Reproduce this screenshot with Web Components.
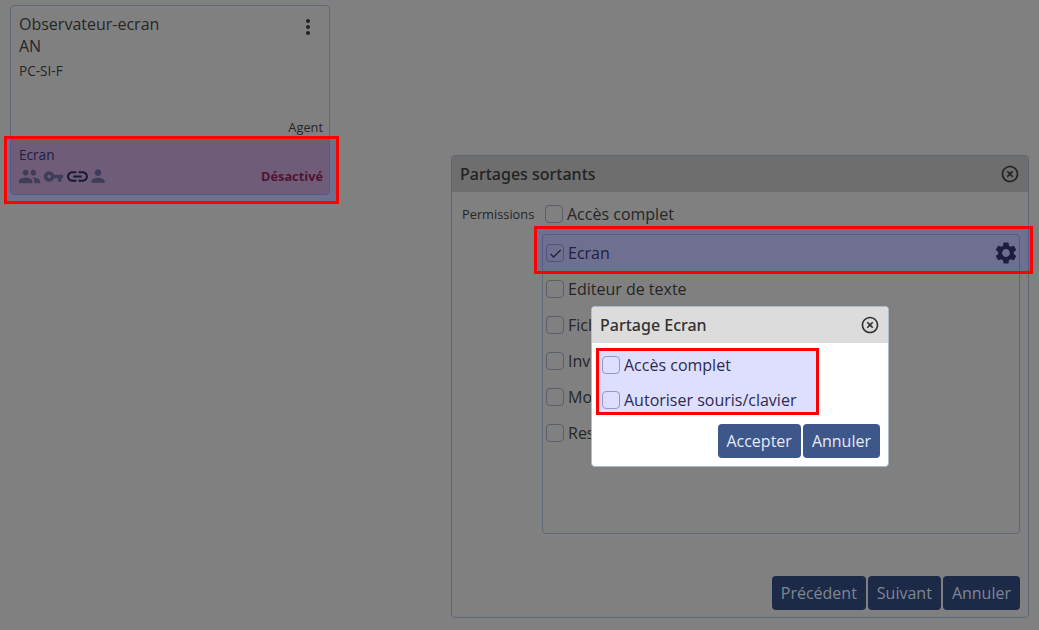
<!DOCTYPE html>
<html lang="fr"><head><meta charset="utf-8"><title>Partages</title>
<style>
html,body{margin:0;height:630px;overflow:hidden}
body{background:#808080;color:#262626;font:16px/22px "Open Sans",sans-serif;position:relative;display:flex;align-items:flex-start}
</style></head><body>
<x-agent-card style="margin:5px 0 0 10px"></x-agent-card>
<x-panel style="margin:155px 0 0 121px"></x-panel>
<x-share-dialog></x-share-dialog>
<script>
const P={
people:'M16 11c1.66 0 2.99-1.34 2.99-3S17.66 5 16 5c-1.66 0-3 1.34-3 3s1.34 3 3 3zm-8 0c1.66 0 2.99-1.34 2.99-3S9.66 5 8 5C6.34 5 5 6.34 5 8s1.34 3 3 3zm0 2c-2.33 0-7 1.17-7 3.5V19h14v-2.5c0-2.33-4.67-3.5-7-3.5zm8 0c-.29 0-.62.02-.97.05 1.16.84 1.97 1.97 1.97 3.45V19h6v-2.5c0-2.33-4.67-3.5-7-3.5z',
key:'M12.65 10C11.83 7.67 9.61 6 7 6c-3.31 0-6 2.69-6 6s2.69 6 6 6c2.61 0 4.83-1.67 5.65-4H17v4h4v-4h2v-4H12.65zM7 14c-1.1 0-2-.9-2-2s.9-2 2-2 2 .9 2 2-.9 2-2 2z',
link:'M3.9 12c0-1.71 1.39-3.1 3.1-3.1h4V7H7c-2.76 0-5 2.24-5 5s2.24 5 5 5h4v-1.9H7c-1.71 0-3.1-1.39-3.1-3.1zM8 13h8v-2H8v2zm9-6h-4v1.9h4c1.71 0 3.1 1.39 3.1 3.1s-1.39 3.1-3.1 3.1h-4V17h4c2.76 0 5-2.24 5-5s-2.24-5-5-5z',
person:'M12 12c2.21 0 4-1.79 4-4s-1.79-4-4-4-4 1.79-4 4 1.79 4 4 4zm0 2c-2.67 0-8 1.34-8 4v2h16v-2c0-2.66-5.33-4-8-4z',
settings:'M19.14 12.94c.04-.3.06-.61.06-.94 0-.32-.02-.64-.07-.94l2.03-1.58c.18-.14.23-.41.12-.61l-1.92-3.32c-.12-.22-.37-.29-.59-.22l-2.39.96c-.5-.38-1.03-.7-1.62-.94l-.36-2.54c-.04-.24-.24-.41-.48-.41h-3.84c-.24 0-.43.17-.47.41l-.36 2.54c-.59.24-1.13.57-1.62.94l-2.39-.96c-.22-.08-.47 0-.59.22L2.74 8.87c-.12.21-.08.47.12.61l2.03 1.58c-.05.3-.09.63-.09.94s.02.64.07.94l-2.03 1.58c-.18.14-.23.41-.12.61l1.92 3.32c.12.22.37.29.59.22l2.39-.96c.5.38 1.03.7 1.62.94l.36 2.54c.05.24.24.41.48.41h3.84c.24 0 .44-.17.47-.41l.36-2.54c.59-.24 1.13-.56 1.62-.94l2.39.96c.22.08.47 0 .59-.22l1.92-3.32c.12-.22.07-.47-.12-.61l-2.01-1.58zM12 15.6c-1.98 0-3.6-1.62-3.6-3.6s1.62-3.6 3.6-3.6 3.6 1.62 3.6 3.6-1.62 3.6-3.6 3.6z',
close:'M14.59 8L12 10.59 9.41 8 8 9.41 10.59 12 8 14.59 9.41 16 12 13.41 14.59 16 16 14.59 13.41 12 16 9.41 14.59 8zM12 2C6.47 2 2 6.47 2 12s4.47 10 10 10 10-4.47 10-10S17.53 2 12 2zm0 18c-4.41 0-8-3.59-8-8s3.59-8 8-8 8 3.59 8 8-3.59 8-8 8z',
more:'M12 8c1.1 0 2-.9 2-2s-.9-2-2-2-2 .9-2 2 .9 2 2 2zm0 2c-1.1 0-2 .9-2 2s.9 2 2 2 2-.9 2-2-.9-2-2-2zm0 6c-1.1 0-2 .9-2 2s.9 2 2 2 2-.9 2-2-.9-2-2-2z',
check:'M9 16.17L4.83 12l-1.41 1.41L9 19 21 7l-1.41-1.41z'};
function def(name,css,html){
  customElements.define(name,class extends HTMLElement{
    connectedCallback(){
      if(this.shadowRoot)return;
      const r=this.attachShadow({mode:'open'});
      r.innerHTML='<style>'+css+'</style>'+(typeof html==='function'?html(this):html);
    }
  });
}
def('x-icon',':host{display:inline-flex;flex:none;line-height:0}svg{display:block;fill:currentColor}',
  e=>{const s=e.getAttribute('size')||24;return `<svg width="${s}" height="${s}" viewBox="0 0 24 24"><path d="${P[e.getAttribute('name')]}"/></svg>`});
def('x-check',':host{display:inline-flex;flex:none;width:18px;height:18px;box-sizing:border-box;border:1px solid var(--cb,#59606b);border-radius:4px;align-items:center;justify-content:center;color:#222}',
  e=>e.hasAttribute('checked')?`<x-icon name="check" size="15"></x-icon>`:'');
def('x-option',':host{display:flex;align-items:center;gap:4px;height:36px;padding-left:3px;box-sizing:border-box;white-space:nowrap}::slotted(*){margin-left:auto}span.clip{max-width:23px;overflow:hidden}',
  e=>`<x-check ${e.hasAttribute('checked')?'checked':''}></x-check><span class="${e.hasAttribute('clip')?'clip':''}">${e.getAttribute('label')}</span><slot></slot>`);
def('x-spot',':host{display:block;position:relative}.o{position:absolute;z-index:3;top:var(--t,0);right:var(--r,0);bottom:var(--b,0);left:var(--l,0);border:3px solid #f00;background:rgba(0,0,255,.13);pointer-events:none}',
  '<slot></slot><div class="o"></div>');
def('x-btn',':host{display:inline-flex;align-items:center;height:34px;padding:0 9px;border-radius:4px;background:var(--bg,#3d578b);color:var(--fg,#e6eaf2);font-size:16px;white-space:nowrap}','<slot></slot>');
def('x-agent-card',`:host{display:flex;flex-direction:column;box-sizing:border-box;width:320px;height:190px;border:1px solid #5f6877;border-radius:4px}
.top{display:flex;justify-content:space-between;padding:7px 9px 0 8px}
.t{font-size:16px;line-height:22px}.s{font-size:13.6px;line-height:18px;margin-top:5px}
.kebab{margin-top:2px;color:#222}
.role{margin-top:auto;text-align:right;font-size:12.8px;line-height:18px;padding:0 6px 3px 0}
.row{height:55px;box-sizing:border-box;background:#806a64;border-radius:0 0 3px 3px;padding:6px 6px 0 8px;font-size:13.6px;line-height:20px}
.l{display:flex;align-items:center;margin-left:-1.5px;color:#4a4742;height:24px;margin-top:-1px}
.st{margin-left:auto;font-weight:700;font-size:12.8px;color:#5e1812}
.k{margin-left:2px;margin-top:1px}.lk{color:#1c1c1c;margin-left:1.1px}.p{margin-left:-1.9px}
x-spot{--t:-3px;--r:-10px;--b:-10px;--l:-7px}`,
`<div class="top"><div><div class="t">Observateur-ecran<br>AN</div><div class="s">PC-SI-F</div></div><x-icon class="kebab" name="more"></x-icon></div>
<div class="role">Agent</div>
<x-spot><div class="row">Ecran<div class="l"><x-icon name="people" size="23"></x-icon><x-icon class="k" name="key" size="21"></x-icon><x-icon class="lk" name="link" size="25"></x-icon><x-icon class="p" name="person" size="20"></x-icon><span class="st">Désactivé</span></div></div></x-spot>`);
def('x-panel',`:host{display:flex;flex-direction:column;box-sizing:border-box;width:578px;height:463px;border:1px solid #5f6877;border-radius:4px}
header{display:flex;align-items:center;justify-content:space-between;height:36px;padding:0 8px;background:#6e6e6e;font-family:"Noto Sans",sans-serif;font-weight:500;flex:none;border-radius:3px 3px 0 0;color:#222}
.b{display:grid;grid-template-columns:80px 478px;padding:13px 0 0 10px}
.lab{font-size:12.8px;line-height:18px}
.all{height:18px;margin-bottom:11px;padding-left:3px;display:flex;gap:4px;align-items:center;white-space:nowrap}
.list{grid-column:2;height:300px;box-sizing:border-box;border:1px solid #5f6877;border-radius:4px}
x-spot{--t:-9px;--r:-14px;--b:-3px;--l:-9px}
footer{margin-top:auto;display:flex;justify-content:flex-end;gap:2px;padding:0 8px 7px 0;--bg:#1d2a47;--fg:#7f8692}`,
`<header><span>Partages sortants</span><x-icon name="close" size="20"></x-icon></header>
<div class="b"><div class="lab">Permissions</div><div class="all"><x-check></x-check><span>Accès complet</span></div>
<div class="list"><x-spot><x-option label="Ecran" checked><x-icon name="settings" size="26" style="color:#222"></x-icon></x-option></x-spot>
<x-option label="Editeur de texte"></x-option><x-option clip label="Fich"></x-option><x-option clip label="Inv"></x-option><x-option clip label="Mo"></x-option><x-option clip label="Res"></x-option></div></div>
<footer><x-btn>Précédent</x-btn><x-btn>Suivant</x-btn><x-btn>Annuler</x-btn></footer>`);
def('x-share-dialog',`:host{position:absolute;left:591px;top:306px;z-index:5;box-sizing:border-box;width:298px;height:161px;background:#fff;border:1px solid #a9bcd0;border-radius:4px;display:flex;flex-direction:column;color:#333}
header{display:flex;align-items:center;justify-content:space-between;height:36px;flex:none;padding:0 8px 0 8px;background:#dcdcdc;font-family:"Noto Sans",sans-serif;font-weight:500;border-radius:3px 3px 0 0}
.b{padding:5px 0 0 4px}
x-spot{width:223px;--b:2px;--cb:#a8b0c8}
x-option{height:35px;padding-left:6px}
x-option:first-child{height:34px}
footer{display:flex;justify-content:flex-end;gap:2px;margin-top:7px;padding-right:8px}
.a{padding-left:8px}`,
`<header><span>Partage Ecran</span><x-icon name="close" size="20"></x-icon></header>
<div class="b"><x-spot><x-option label="Accès complet"></x-option><x-option label="Autoriser souris/clavier"></x-option></x-spot></div>
<footer><x-btn class="a">Accepter</x-btn><x-btn>Annuler</x-btn></footer>`);
</script>
</body></html>
